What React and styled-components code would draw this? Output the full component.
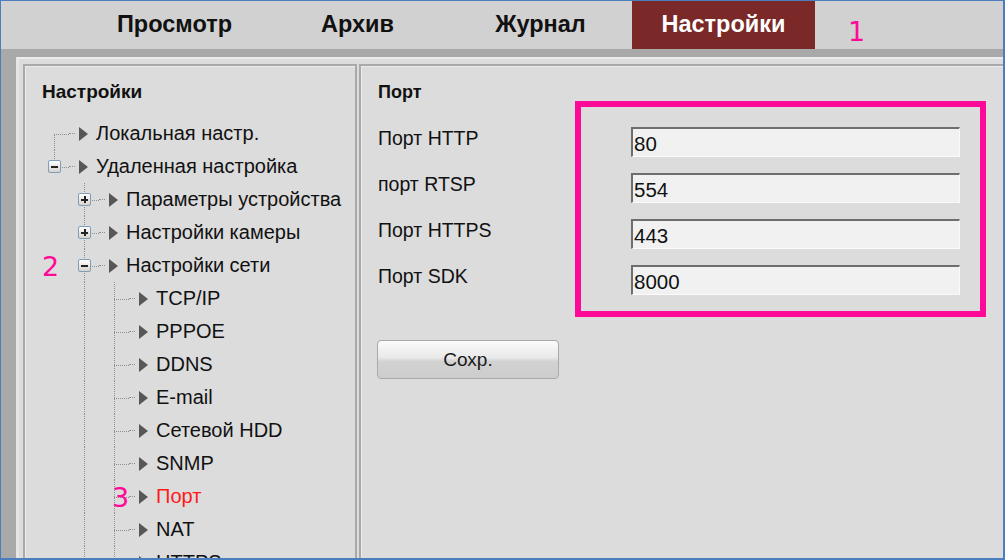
import styled, { createGlobalStyle } from "styled-components";

const GlobalStyle = createGlobalStyle`
  html, body {
    margin: 0;
    padding: 0;
    overflow: hidden;
    background: #dcdcdc;
  }
  * { box-sizing: border-box; }
`;

const Frame = styled.div`
  width: 1005px;
  height: 560px;
  border: 1px solid #4a7ebf;
  border-right-width: 2px;
  border-bottom-width: 2px;
  display: flex;
  flex-direction: column;
  overflow: hidden;
  font-family: "Liberation Sans", Arial, sans-serif;
  color: #111;
`;

const TabBar = styled.div`
  height: 48px;
  flex-shrink: 0;
  background: #d1d1d1;
  display: flex;
  align-items: stretch;
  padding-left: 82px;
  border-bottom: 8px solid #a9a9a9;
  box-sizing: content-box;
`;

const Tab = styled.div`
  width: 183px;
  display: flex;
  align-items: center;
  justify-content: center;
  font-size: 23.5px;
  font-weight: bold;
  padding-bottom: 2px;
  color: ${(p) => (p.$active ? "#fff" : "#111")};
  background: ${(p) => (p.$active ? "#7a2828" : "transparent")};
`;

const Mark = styled.span`
  font-family: "DejaVu Sans", sans-serif;
  font-weight: normal;
  font-size: 27px;
  line-height: 1;
  color: #ff0a98;
`;

const TopMark = styled(Mark)`
  align-self: flex-end;
  margin-left: 33px;
  margin-bottom: 4px;
`;

const Body = styled.div`
  flex: 1;
  display: flex;
  background: #a9a9a9;
  padding-left: 15px;
  min-height: 0;
`;

const Workspace = styled.div`
  flex: 1;
  display: flex;
  gap: 2px;
  background: #dcdcdc;
  border-top: 2px solid #ececec;
  border-left: 3px solid #e6e6e6;
  padding: 5px 0 0 4px;
  min-height: 0;
`;

const Panel = styled.div`
  background: #dcdcdc;
  border: 2px solid #a9a9a9;
  box-shadow: inset 1px 1px 0 #ececec;
  height: 540px;
  padding: 14px 0 0 17px;
  flex-shrink: 0;
`;

const TreePanel = styled(Panel)`
  width: 334px;
`;

const FormPanel = styled(Panel)`
  flex: 1;
  border-right: none;
`;

const PanelTitle = styled.div`
  font-size: ${(p) => p.$size || 18}px;
  font-weight: bold;
  line-height: 24px;
  height: 24px;
`;

const Tree = styled.div`
  margin-top: 13px;
  margin-left: -3px;
`;

const TreeRow = styled.div`
  position: relative;
  height: 33px;
  display: flex;
  align-items: center;
`;

const Guide = styled.div`
  width: 30px;
  height: 100%;
  position: relative;
  flex-shrink: 0;
  &::before {
    content: "";
    display: ${(p) => (p.$line ? "block" : "none")};
    position: absolute;
    left: 15px;
    top: 0;
    bottom: 0;
    border-left: 1px dotted #8f8f8f;
  }
`;

const NodeCell = styled.div`
  width: 30px;
  height: 100%;
  position: relative;
  flex-shrink: 0;
  display: flex;
  align-items: center;
  justify-content: center;
  &::before {
    content: "";
    position: absolute;
    left: 15px;
    top: ${(p) => (p.$up ? "0" : "50%")};
    bottom: ${(p) => (p.$down ? "0" : "50%")};
    border-left: 1px dotted #8f8f8f;
  }
  &::after {
    content: "";
    position: absolute;
    left: 15px;
    right: 0;
    top: 50%;
    border-top: 1px dotted #8f8f8f;
  }
`;

const Toggle = styled.span`
  position: relative;
  z-index: 1;
  width: 13px;
  height: 13px;
  margin-left: 1px;
  border: 1px solid #7f9db9;
  border-radius: 2px;
  background: linear-gradient(#ffffff, #d6d3ce);
  display: flex;
  align-items: center;
  justify-content: center;
  &::before {
    content: "";
    position: absolute;
    width: 7px;
    height: 2px;
    background: #222;
  }
  &::after {
    content: "";
    position: absolute;
    display: ${(p) => (p.$open ? "none" : "block")};
    width: 2px;
    height: 7px;
    background: #222;
  }
`;

const Stub = styled.span`
  width: 6px;
  border-top: 1px dotted #8f8f8f;
  flex-shrink: 0;
`;

const Arrow = styled.span`
  width: 0;
  height: 0;
  margin-left: 4px;
  border-left: 9px solid #575757;
  border-top: 7px solid transparent;
  border-bottom: 7px solid transparent;
  flex-shrink: 0;
`;

const NodeLabel = styled.span`
  margin-left: 8px;
  font-size: 20px;
  white-space: nowrap;
  color: ${(p) => (p.$active ? "#ff1a1a" : "#111")};
`;

const RowMark = styled(Mark)`
  position: absolute;
  z-index: 2;
  top: 4px;
`;

const Fields = styled.div`
  display: flex;
  margin-top: -3px;
`;

const LabelCol = styled.div`
  width: 197px;
  padding-top: 14px;
  display: flex;
  flex-direction: column;
`;

const FieldLabel = styled.div`
  height: 46px;
  line-height: 46px;
  font-size: 19.5px;
  color: #111;
`;

const Highlight = styled.div`
  width: 411px;
  border: 6px solid #ff0a98;
  padding: 20px 20px 16px 50px;
  display: flex;
  flex-direction: column;
  gap: 16px;
`;

const PortInput = styled.input`
  width: 329px;
  height: 30px;
  background: #f1f1f1;
  border-top: 2px solid #6e6e6e;
  border-left: 2px solid #6e6e6e;
  border-right: 1px solid #fafafa;
  border-bottom: 1px solid #fafafa;
  padding: 2px 0 0 1px;
  font-family: "Liberation Sans", Arial, sans-serif;
  font-size: 20.5px;
  color: #111;
  outline: none;
`;

const SaveButton = styled.button`
  margin-top: 23px;
  margin-left: -1px;
  width: 182px;
  height: 39px;
  border: 1px solid #a9a9a9;
  border-radius: 4px;
  background: linear-gradient(#fbfbfb 0%, #e9e9e9 45%, #d2d2d2 55%, #cdcdcd 100%);
  font-family: "Liberation Sans", Arial, sans-serif;
  font-size: 19px;
  color: #1a1a1a;
  padding: 0;
`;

const tabs = ["Просмотр", "Архив", "Журнал", "Настройки"];

const treeRows = [
  { label: "Локальная настр.", guides: [], up: false, down: true },
  { label: "Удаленная настройка", guides: [], up: true, down: false, toggle: "open" },
  { label: "Параметры устройства", guides: [false], up: true, down: true, toggle: "closed" },
  { label: "Настройки камеры", guides: [false], up: true, down: true, toggle: "closed" },
  { label: "Настройки сети", guides: [false], up: true, down: true, toggle: "open", mark: "2", markX: 3 },
  { label: "TCP/IP", guides: [false, true], up: true, down: true },
  { label: "PPPOE", guides: [false, true], up: true, down: true },
  { label: "DDNS", guides: [false, true], up: true, down: true },
  { label: "E-mail", guides: [false, true], up: true, down: true },
  { label: "Сетевой HDD", guides: [false, true], up: true, down: true },
  { label: "SNMP", guides: [false, true], up: true, down: true },
  { label: "Порт", guides: [false, true], up: true, down: true, active: true, mark: "3", markX: 73 },
  { label: "NAT", guides: [false, true], up: true, down: true },
  { label: "HTTPS", guides: [false, true], up: true, down: true },
];

const ports = [
  { label: "Порт HTTP", value: "80" },
  { label: "порт RTSP", value: "554" },
  { label: "Порт HTTPS", value: "443" },
  { label: "Порт SDK", value: "8000" },
];

export default function App() {
  return (
    <>
      <GlobalStyle />
      <Frame>
        <TabBar>
          {tabs.map((t) => (
            <Tab key={t} $active={t === "Настройки"}>
              {t}
            </Tab>
          ))}
          <TopMark>1</TopMark>
        </TabBar>
        <Body>
          <Workspace>
            <TreePanel>
              <PanelTitle $size={19}>Настройки</PanelTitle>
              <Tree>
                {treeRows.map((row) => (
                  <TreeRow key={row.label}>
                    {row.mark && <RowMark style={{ left: row.markX }}>{row.mark}</RowMark>}
                    {row.guides.map((g, i) => (
                      <Guide key={i} $line={g} />
                    ))}
                    <NodeCell $up={row.up} $down={row.down}>
                      {row.toggle && <Toggle $open={row.toggle === "open"} />}
                    </NodeCell>
                    <Stub />
                    <Arrow />
                    <NodeLabel $active={row.active}>{row.label}</NodeLabel>
                  </TreeRow>
                ))}
              </Tree>
            </TreePanel>
            <FormPanel>
              <PanelTitle>Порт</PanelTitle>
              <Fields>
                <LabelCol>
                  {ports.map((p) => (
                    <FieldLabel key={p.label}>{p.label}</FieldLabel>
                  ))}
                </LabelCol>
                <Highlight>
                  {ports.map((p) => (
                    <PortInput key={p.label} defaultValue={p.value} readOnly />
                  ))}
                </Highlight>
              </Fields>
              <SaveButton>Сохр.</SaveButton>
            </FormPanel>
          </Workspace>
        </Body>
      </Frame>
    </>
  );
}
